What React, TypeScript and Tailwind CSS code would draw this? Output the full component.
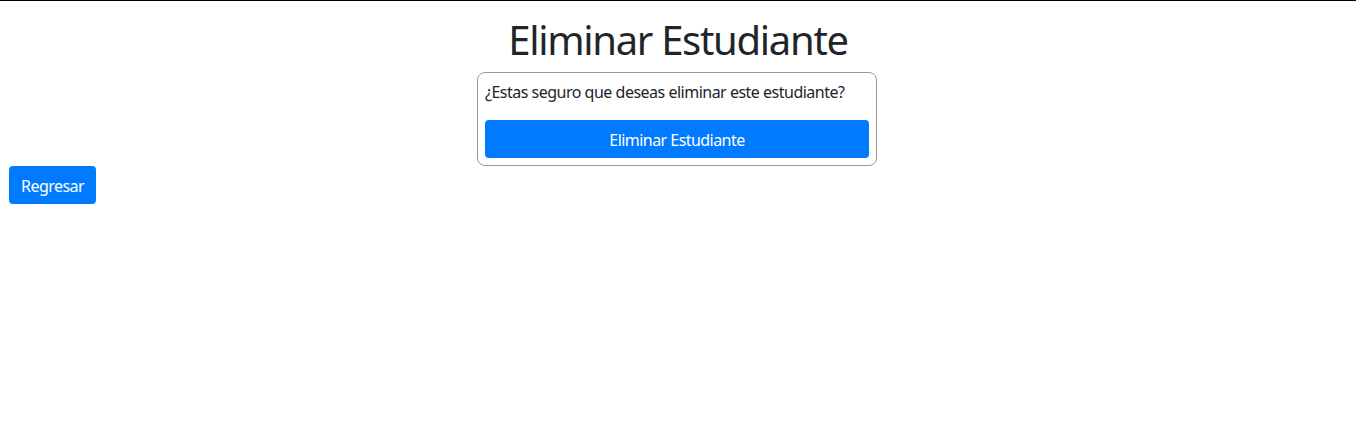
export default function App() {
  return (
    <div className="min-h-[441px] bg-white border-t border-black text-[#212529]" style={{ fontFamily: '"Noto Sans", "Open Sans", sans-serif' }}>
      <h1 className="text-center text-[40px] leading-[48px] font-normal tracking-[-1.3px] pt-[15px] mb-2">Eliminar Estudiante</h1>
      <div className="flex justify-center pr-[2px]">
        <div className="w-[400px] border border-[#999] rounded-lg p-[7px]">
          <p className="text-base leading-6 tracking-[-0.5px] mb-4 whitespace-nowrap">¿Estas seguro que deseas eliminar este estudiante?</p>
          <button className="w-full h-[38px] pt-[2px] bg-[#007bff] text-white rounded text-base tracking-[-0.55px]">Eliminar Estudiante</button>
        </div>
      </div>
      <button className="ml-[9px] w-[87px] h-[38px] pt-[2px] bg-[#007bff] text-white rounded text-base tracking-[-0.55px]">Regresar</button>
    </div>
  );
}
